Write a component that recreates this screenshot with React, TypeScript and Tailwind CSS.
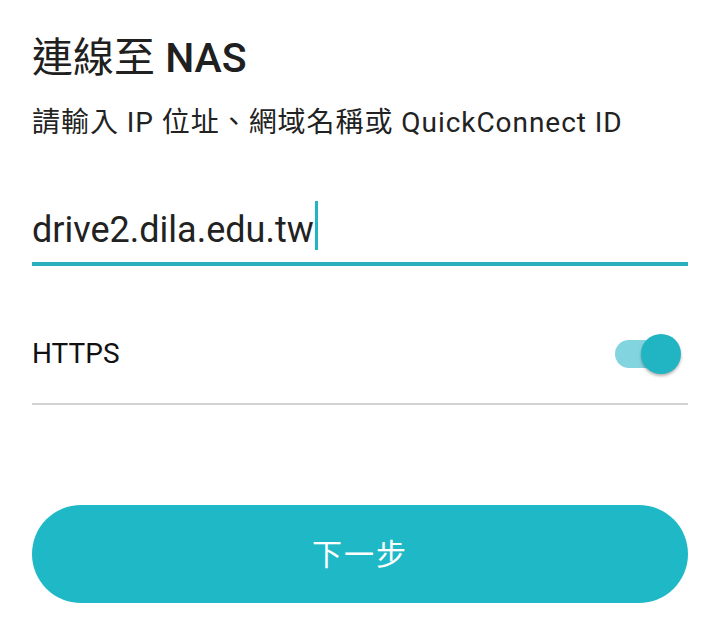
export default function App() {
  return (
    <main
      className="w-[720px] h-[628px] bg-white px-8 flex flex-col text-[#202020]"
      style={{ fontFamily: 'Roboto, "Noto Sans CJK TC", sans-serif' }}
    >
      <h1 className="mt-[33px] text-[41px] leading-[50px] font-normal">
        連線至 <span className="font-medium">NAS</span>
      </h1>
      <p className="mt-[23px] text-[28px] leading-[34px] tracking-[0.95px] text-[#222]">
        請輸入 IP 位址、網域名稱或 QuickConnect ID
      </p>

      <div className="mt-[64px] flex items-end h-[62px] pb-[12px] border-b-4 border-[#2bb0bd]">
        <span className="text-[36px] leading-[40px] text-[#222]">drive2.dila.edu.tw</span>
        <span className="ml-[1px] w-[3px] h-[49px] bg-[#22b4c3]" />
      </div>

      <div className="mt-[60px] flex items-center justify-between h-[60px] pb-[4px]">
        <span className="text-[28px] leading-[32px] text-[#111]">HTTPS</span>
        <div className="relative w-[66px] h-[40px] mr-[7px] flex items-center">
          <div className="absolute left-0 w-[48px] h-[28px] rounded-full bg-[#82d5de]" />
          <div className="absolute right-0 w-[40px] h-[40px] rounded-full bg-[#21b5c4] shadow-[0_2px_3px_rgba(0,0,0,0.3)]" />
        </div>
      </div>
      <div className="mt-[17px] h-[2px] bg-[#d3d3d3]" />

      <button className="mt-[100px] h-[98px] rounded-full bg-[#1fb8c6] text-white text-[30px] tracking-[2px]">
        下一步
      </button>
    </main>
  );
}
